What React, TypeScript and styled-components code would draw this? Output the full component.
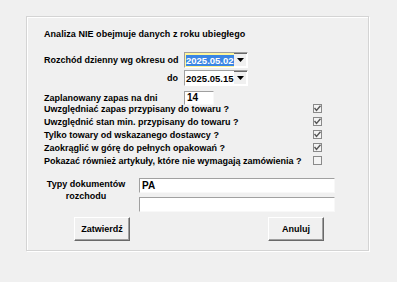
import React from "react";
import styled, { createGlobalStyle } from "styled-components";

const GlobalStyle = createGlobalStyle`
  body {
    margin: 0;
    background: #f0f0f0;
    font-family: "Liberation Sans", Arial, sans-serif;
    font-size: 9px;
    font-weight: bold;
    color: #000;
  }
`;

const Page = styled.div`
  width: 397px;
  height: 282px;
  padding: 16px 0 0 26px;
  box-sizing: border-box;
`;

const Panel = styled.div`
  width: 343px;
  height: 235px;
  box-sizing: border-box;
  border: 1px solid #d4d4d4;
  box-shadow: inset 1px 1px 0 #fff, 1px 1px 0 #fff;
  padding: 10px 0 0 17px;
  display: flex;
  flex-direction: column;
`;

const Title = styled.div`
  height: 14px;
  line-height: 14px;
  margin-bottom: 11px;
  letter-spacing: 0.05px;
`;

const FormGrid = styled.div`
  display: grid;
  grid-template-columns: 134px auto;
  column-gap: 6px;
  row-gap: 2px;
  align-items: center;
`;

const Label = styled.div<{ $right?: boolean; $gap?: number }>`
  text-align: ${(p) => (p.$right ? "right" : "left")};
  line-height: 16px;
  white-space: nowrap;
  margin-top: ${(p) => p.$gap ?? 0}px;
`;

const Combo = styled.div`
  width: 64px;
  height: 16px;
  box-sizing: border-box;
  border-top: 1px solid #a0a0a0;
  border-left: 1px solid #a0a0a0;
  border-right: 1px solid #fff;
  border-bottom: 1px solid #fff;
  box-shadow: inset 1px 1px 0 #696969;
  display: flex;
  background: #fff;
`;

const ComboText = styled.div<{ $active?: boolean }>`
  flex: 1;
  min-width: 0;
  padding: 1px 0 0 1px;
  background: ${(p) => (p.$active ? "#fff59a" : "#fff")};
  line-height: 13px;
  font-size: 9.5px;
  white-space: nowrap;
  overflow: hidden;
`;

const Selected = styled.span`
  background: #3b86e3;
  color: #fff;
`;

const DropButton = styled.div`
  width: 12px;
  flex-shrink: 0;
  margin: 1px 1px 1px 0;
  background: #f0f0f0;
  display: flex;
  align-items: center;
  justify-content: center;
`;

const SmallInput = styled.div<{ $w: number; $gap?: number }>`
  width: ${(p) => p.$w}px;
  height: 14px;
  box-sizing: border-box;
  border-top: 1px solid #a0a0a0;
  border-left: 1px solid #a0a0a0;
  border-right: 1px solid #f8f8f8;
  border-bottom: 1px solid #f8f8f8;
  background: #fff;
  padding-left: 2px;
  line-height: 12px;
  font-size: 10px;
  margin-top: ${(p) => p.$gap ?? 0}px;
`;

const CheckList = styled.div`
  display: flex;
  flex-direction: column;
  margin-top: -4px;
`;

const CheckRow = styled.div`
  display: flex;
  align-items: center;
  height: 13px;
`;

const CheckLabel = styled.div`
  width: 269px;
  white-space: nowrap;
`;

const Box = styled.div`
  width: 9px;
  height: 9px;
  box-sizing: border-box;
  border: 1px solid #8a8a8a;
  background: #f4f4f4;
  display: flex;
  align-items: center;
  justify-content: center;
`;

const DocsRow = styled.div`
  display: flex;
  margin-top: 11px;
`;

const DocsLabel = styled.div`
  width: 84px;
  margin-right: 11px;
  text-align: center;
  line-height: 12px;
`;

const DocsInputs = styled.div`
  display: flex;
  flex-direction: column;
  gap: 4px;
`;

const WideInput = styled.div`
  width: 196px;
  height: 15px;
  box-sizing: border-box;
  border-top: 1px solid #a0a0a0;
  border-left: 1px solid #a0a0a0;
  border-right: 1px solid #f8f8f8;
  border-bottom: 1px solid #f8f8f8;
  background: #fff;
  padding-left: 2px;
  line-height: 13px;
  font-size: 10px;
`;

const Buttons = styled.div`
  display: flex;
  justify-content: space-between;
  width: 250px;
  margin: 5px 0 0 30px;
`;

const Button = styled.button`
  width: 56px;
  height: 24px;
  box-sizing: border-box;
  background: #f0f0f0;
  border-top: 1px solid #fff;
  border-left: 1px solid #fff;
  border-right: 1px solid #696969;
  border-bottom: 1px solid #696969;
  box-shadow: inset -1px -1px 0 #a0a0a0;
  font-family: inherit;
  font-size: 9px;
  font-weight: bold;
  padding: 0;
  color: #000;
`;

const Arrow = () => (
  <svg width="7" height="4" viewBox="0 0 7 4">
    <path d="M0 0h7L3.5 4z" fill="#000" />
  </svg>
);

const Check = () => (
  <svg width="7" height="7" viewBox="0 0 7 7">
    <path d="M0.5 3l2 2.5L6.5 0.8" fill="none" stroke="#555" strokeWidth="1.4" />
  </svg>
);

const checks = [
  { label: "Uwzględniać zapas przypisany do towaru ?", on: true },
  { label: "Uwzględnić stan min. przypisany do towaru ?", on: true },
  { label: "Tylko towary od wskazanego dostawcy ?", on: true },
  { label: "Zaokrąglić w górę do pełnych opakowań ?", on: true },
  { label: "Pokazać również artykuły, które nie wymagają zamówienia ?", on: false },
];

const App: React.FC = () => {
  return (
    <Page>
      <GlobalStyle />
      <Panel>
        <Title>Analiza NIE obejmuje danych z roku ubiegłego</Title>
        <FormGrid>
          <Label $right>Rozchód dzienny wg okresu od</Label>
          <Combo>
            <ComboText $active>
              <Selected>2025.05.02</Selected>
            </ComboText>
            <DropButton>
              <Arrow />
            </DropButton>
          </Combo>
          <Label $right>do</Label>
          <Combo>
            <ComboText>2025.05.15</ComboText>
            <DropButton>
              <Arrow />
            </DropButton>
          </Combo>
          <Label $gap={2}>Zaplanowany zapas na dni</Label>
          <SmallInput $w={30} $gap={2}>
            14
          </SmallInput>
        </FormGrid>
        <CheckList>
          {checks.map((c) => (
            <CheckRow key={c.label}>
              <CheckLabel>{c.label}</CheckLabel>
              <Box>{c.on && <Check />}</Box>
            </CheckRow>
          ))}
        </CheckList>
        <DocsRow>
          <DocsLabel>
            Typy dokumentów
            <br />
            rozchodu
          </DocsLabel>
          <DocsInputs>
            <WideInput>PA</WideInput>
            <WideInput />
          </DocsInputs>
        </DocsRow>
        <Buttons>
          <Button>Zatwierdź</Button>
          <Button>Anuluj</Button>
        </Buttons>
      </Panel>
    </Page>
  );
};

export default App;
